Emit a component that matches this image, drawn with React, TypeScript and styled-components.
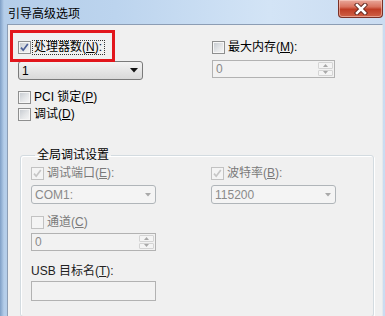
import { FC, ReactNode } from "react";
import styled, { createGlobalStyle } from "styled-components";

const GlobalStyle = createGlobalStyle`
    html, body {
        margin: 0;
        padding: 0;
    }
    body {
        width: 385px;
        height: 316px;
        overflow: hidden;
        background: #f0f0f0;
        font-family: "Liberation Sans", "Noto Sans CJK SC", sans-serif;
        font-size: 12px;
        color: #000;
    }
`;

const Window = styled.div`
    display: flex;
    flex-direction: column;
    width: 385px;
    height: 316px;
    background: linear-gradient(
        to right,
        #7f9fc6 0,
        #b4cde9 4px,
        #bcd4ee 30%,
        #d3e4f6 70%,
        #cadcf1 100%
    );
`;

const TitleBar = styled.div`
    display: flex;
    justify-content: space-between;
    align-items: flex-start;
    height: 24px;
    flex: none;
`;

const Title = styled.span`
    padding: 7px 0 0 8px;
    font-size: 12px;
    line-height: 14px;
`;

const CloseButton = styled.div`
    display: flex;
    align-items: center;
    justify-content: center;
    width: 45px;
    height: 18px;
    margin-right: 2px;
    box-sizing: border-box;
    border: 1px solid #7a3026;
    border-top: none;
    border-radius: 0 0 4px 4px;
    background: linear-gradient(
        #e9a89b 0,
        #d9735f 40%,
        #bf3d25 55%,
        #cf6146 100%
    );
    box-shadow: inset 0 0 0 1px rgba(255, 220, 210, 0.5);
`;

const Body = styled.div`
    flex: 1;
    margin: 0 2px 0 7px;
    padding: 16px 0 0 10px;
    background: #f0f0f0;
    border: 1px solid #8c9db4;
    border-bottom: none;
    border-right-color: #e4e8ee;
`;

const TopGrid = styled.div`
    display: grid;
    grid-template-columns: 194px 1fr;
`;

const Column = styled.div`
    display: flex;
    flex-direction: column;
    align-items: flex-start;
`;

const Row = styled.label<{ $top?: number }>`
    position: relative;
    display: flex;
    align-items: center;
    gap: 2px;
    height: 13px;
    margin-top: ${({ $top }) => $top ?? 0}px;
    white-space: nowrap;
`;

const Highlight = styled.span`
    position: absolute;
    left: -8px;
    top: -11px;
    width: 105px;
    height: 32px;
    box-sizing: border-box;
    border: 3px solid #e2161c;
    pointer-events: none;
`;

const Box = styled.span<{ $disabled?: boolean }>`
    display: flex;
    align-items: center;
    justify-content: center;
    flex: none;
    width: 13px;
    height: 13px;
    box-sizing: border-box;
    border: 1px solid ${({ $disabled }) => ($disabled ? "#c2c2c2" : "#8e8f8f")};
    background: ${({ $disabled }) =>
        $disabled
            ? "#f4f4f4"
            : "linear-gradient(135deg, #c3c8ce 0, #e4e6e8 55%, #f7f7f7 100%)"};
    box-shadow: inset 0 0 0 1px
        ${({ $disabled }) => ($disabled ? "#f4f4f4" : "#f6f6f6")};
`;

const Label = styled.span<{ $disabled?: boolean; $focus?: boolean }>`
    line-height: 13px;
    padding: 0 2px 0 1px;
    color: ${({ $disabled }) => ($disabled ? "#7a7a7a" : "#000")};
    border: 1px dotted ${({ $focus }) => ($focus ? "#333" : "transparent")};
    margin: -1px;

    u {
        text-decoration: underline;
        text-underline-offset: 1px;
    }
`;

const Select = styled.div<{ $disabled?: boolean; $top?: number; $h?: number }>`
    display: flex;
    align-items: center;
    justify-content: space-between;
    width: 125px;
    height: ${({ $h }) => $h ?? 19}px;
    margin-top: ${({ $top }) => $top ?? 0}px;
    box-sizing: border-box;
    padding: 0 4px 0 3px;
    border: 1px solid ${({ $disabled }) => ($disabled ? "#b0b5b9" : "#7a7a7a")};
    border-radius: 3px;
    background: ${({ $disabled }) =>
        $disabled ? "#f4f4f4" : "linear-gradient(#f3f3f3, #e6e6e6 50%, #d9d9d9)"};
    color: ${({ $disabled }) => ($disabled ? "#8a8a8a" : "#000")};
    line-height: 14px;
`;

const Field = styled.div<{ $w?: number; $h?: number; $top?: number }>`
    display: flex;
    align-items: stretch;
    width: ${({ $w }) => $w ?? 125}px;
    height: ${({ $h }) => $h ?? 18}px;
    margin-top: ${({ $top }) => $top ?? 0}px;
    box-sizing: border-box;
    border: 1px solid #b2b2b2;
    background: #f2f2f2;
    color: #8a8a8a;
`;

const FieldText = styled.span`
    flex: 1;
    padding-left: 3px;
    line-height: 16px;
`;

const Spin = styled.div`
    display: flex;
    flex-direction: column;
    width: 15px;
    padding: 1px;
    gap: 1px;
`;

const SpinButton = styled.div`
    flex: 1;
    display: flex;
    align-items: center;
    justify-content: center;
    border: 1px solid #d4d4d4;
    border-radius: 1px;
    background: #f4f4f4;
`;

const Group = styled.fieldset`
    width: 354px;
    margin: 26px 0 0 2px;
    padding: 4px 0 15px 10px;
    box-sizing: border-box;
    border: 1px solid #d3dbe0;
    border-radius: 3px;
    box-shadow: 1px 1px 0 #ffffff, inset 1px 1px 0 #ffffff;
`;

const Legend = styled.legend`
    margin-left: 4px;
    padding: 0 2px;
    line-height: 16px;
    font-size: 12px;
`;

const GroupGrid = styled.div`
    display: grid;
    grid-template-columns: 180px 1fr;
`;

const PlainLabel = styled.div<{ $top?: number }>`
    margin-top: ${({ $top }) => $top ?? 0}px;
    line-height: 13px;
    color: #222;

    u {
        text-underline-offset: 1px;
    }
`;

const Check: FC<{ checked?: boolean; disabled?: boolean }> = ({
    checked,
    disabled,
}) => (
    <Box $disabled={disabled}>
        {checked && (
            <svg width="11" height="11" viewBox="0 0 11 11">
                <path
                    d="M2 5.6 L4.2 8.2 L8.8 2"
                    fill="none"
                    stroke={disabled ? "#c6c6c6" : "#4a5e96"}
                    strokeWidth="1.7"
                />
            </svg>
        )}
    </Box>
);

const Arrow: FC<{ disabled?: boolean }> = ({ disabled }) =>
    disabled ? (
        <svg width="6" height="4" viewBox="0 0 6 4">
            <polygon points="0,0 6,0 3,3.5" fill="#a9a9a9" />
        </svg>
    ) : (
        <svg width="8" height="5" viewBox="0 0 8 5">
            <polygon points="0,0 8,0 4,4.5" fill="#111" />
        </svg>
    );

const SpinField: FC<{ value: string; top?: number; w?: number }> = ({
    value,
    top,
    w,
}) => (
    <Field $top={top} $w={w}>
        <FieldText>{value}</FieldText>
        <Spin>
            <SpinButton>
                <svg width="5" height="3" viewBox="0 0 5 3">
                    <polygon points="0,3 5,3 2.5,0" fill="#a8a8a8" />
                </svg>
            </SpinButton>
            <SpinButton>
                <svg width="5" height="3" viewBox="0 0 5 3">
                    <polygon points="0,0 5,0 2.5,3" fill="#a8a8a8" />
                </svg>
            </SpinButton>
        </Spin>
    </Field>
);

const Option: FC<{
    checked?: boolean;
    disabled?: boolean;
    focus?: boolean;
    top?: number;
    children: ReactNode;
}> = ({ checked, disabled, focus, top, children }) => (
    <Row $top={top}>
        <Check checked={checked} disabled={disabled} />
        <Label $disabled={disabled} $focus={focus}>
            {children}
        </Label>
        {focus && <Highlight />}
    </Row>
);

const App: FC = () => {
    return (
        <>
            <GlobalStyle />
            <Window>
                <TitleBar>
                    <Title>引导高级选项</Title>
                    <CloseButton>
                        <svg width="14" height="12" viewBox="0 0 14 12">
                            <path
                                d="M3 2 L11 10 M11 2 L3 10"
                                stroke="#5a2018"
                                strokeWidth="4.4"
                                strokeLinecap="square"
                            />
                            <path
                                d="M3 2 L11 10 M11 2 L3 10"
                                stroke="#ffffff"
                                strokeWidth="2.6"
                                strokeLinecap="square"
                            />
                        </svg>
                    </CloseButton>
                </TitleBar>
                <Body>
                    <TopGrid>
                        <Column>
                            <Option checked focus>
                                处理器数(<u>N</u>):
                            </Option>
                            <Select $top={7}>
                                <span>1</span>
                                <Arrow />
                            </Select>
                        </Column>
                        <Column>
                            <Option>
                                最大内存(<u>M</u>):
                            </Option>
                            <SpinField value="0" top={6} w={123} />
                        </Column>
                    </TopGrid>
                    <Column>
                        <Option top={11}>
                            PCI 锁定(<u>P</u>)
                        </Option>
                        <Option top={4}>
                            调试(<u>D</u>)
                        </Option>
                    </Column>
                    <Group>
                        <Legend>全局调试设置</Legend>
                        <GroupGrid>
                            <Column>
                                <Option checked disabled>
                                    调试端口(<u>E</u>):
                                </Option>
                                <Select $disabled $top={5}>
                                    <span>COM1:</span>
                                    <Arrow disabled />
                                </Select>
                            </Column>
                            <Column>
                                <Option checked disabled>
                                    波特率(<u>B</u>):
                                </Option>
                                <Select $disabled $top={5}>
                                    <span>115200</span>
                                    <Arrow disabled />
                                </Select>
                            </Column>
                        </GroupGrid>
                        <Column>
                            <Option disabled top={12}>
                                通道(<u>C</u>)
                            </Option>
                            <SpinField value="0" top={4} />
                            <PlainLabel $top={14}>
                                USB 目标名(<u>T</u>):
                            </PlainLabel>
                            <Field $top={3} $h={20} />
                        </Column>
                    </Group>
                </Body>
            </Window>
        </>
    );
};

export default App;
